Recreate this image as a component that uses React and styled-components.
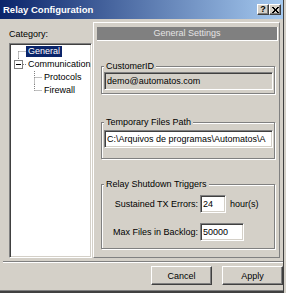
import styled, { createGlobalStyle } from "styled-components";

// estilos globales
const GlobalStyle = createGlobalStyle`
  html, body {
    margin: 0;
    padding: 0;
    background: #d4d0c8;
  }
  body {
    font-family: "Liberation Sans", Arial, sans-serif;
    font-size: 9px;
    color: #000;
  }
  * {
    box-sizing: border-box;
  }
`;

const Window = styled.div`
  width: 286px;
  height: 293px;
  display: flex;
  flex-direction: column;
  background: #d4d0c8;
  padding: 0 3px 3px 0;
  box-shadow: inset -2px 0 0 #d4d0c8, inset -3px 0 0 #404040,
    inset 0 -2px 0 #404040, inset 0 -3px 0 #808080;
`;

const TitleBar = styled.div`
  height: 19px;
  display: flex;
  align-items: center;
  padding: 0 2px 0 3px;
  background: linear-gradient(to right, #0a246a, #a6caf0);
`;

const TitleText = styled.div`
  flex: 1;
  color: #fff;
  font-weight: bold;
  font-size: 9.5px;
`;

const CaptionButton = styled.div`
  width: 12px;
  height: 11px;
  display: flex;
  align-items: center;
  justify-content: center;
  background: #d4d0c8;
  border: 1px solid;
  border-color: #fff #404040 #404040 #fff;
  box-shadow: inset -1px -1px 0 #808080;
  font-weight: bold;
  font-size: 9px;
  line-height: 9px;
`;

const Main = styled.div`
  height: 239px;
  display: flex;
  gap: 1px;
  padding: 3px 0 0 9px;
`;

const LeftColumn = styled.div`
  width: 83px;
  display: flex;
  flex-direction: column;
`;

const Label = styled.div`
  line-height: 11px;
  margin-top: 7px;
`;

const Tree = styled.div`
  margin-top: 3px;
  height: 215px;
  background: #fff;
  border: 1px solid;
  border-color: #808080 #fff #fff #808080;
  box-shadow: inset 1px 1px 0 #404040, inset -1px -1px 0 #d4d0c8;
  padding: 1px 1px 0 1px;
`;

const TreeRow = styled.div`
  height: 13px;
  display: flex;
  align-items: center;
  padding-left: ${(p) => p.$indent}px;

  svg {
    flex: none;
  }
`;

const TreeLabel = styled.span`
  line-height: 11px;
  padding: 0 2px;
  white-space: nowrap;
  background: ${(p) => (p.$selected ? "#0a246a" : "transparent")};
  color: ${(p) => (p.$selected ? "#fff" : "#000")};
`;

const Panel = styled.div`
  width: 187px;
  height: 236px;
  border: 1px solid;
  border-color: #fff #808080 #808080 #fff;
  padding: 4px 1px 0 3px;
  display: flex;
  flex-direction: column;
`;

const PanelHeader = styled.div`
  height: 14px;
  line-height: 13px;
  background: #808080;
  border-bottom: 1px solid #fff;
  border-right: 1px solid #fff;
  color: #e4e4e4;
  text-align: center;
`;

const PanelBody = styled.div`
  display: flex;
  flex-direction: column;
  padding: 0 3px 0 4px;
`;

const Group = styled.fieldset`
  margin: ${(p) => p.$top}px 0 0 0;
  padding: ${(p) => p.$padTop}px 1px ${(p) => p.$padBottom}px 2px;
  min-width: 0;
  border: 1px solid #808080;
  box-shadow: inset 1px 1px 0 #fff, 1px 1px 0 #fff;
`;

const Legend = styled.legend`
  padding: 0 2px;
  line-height: 11px;
  background: #d4d0c8;
`;

const TextBox = styled.input`
  display: block;
  width: ${(p) => p.$width || "100%"};
  height: 18px;
  margin: 0;
  padding: 0 2px;
  font-family: "Liberation Sans", Arial, sans-serif;
  font-size: 9px;
  color: #000;
  background: ${(p) => (p.$disabled ? "#d4d0c8" : "#fff")};
  border: 1px solid;
  border-color: #808080 #fff #fff #808080;
  box-shadow: inset 1px 1px 0 #404040, inset -1px -1px 0 #d4d0c8;
  outline: none;
`;

const TriggerGrid = styled.div`
  display: grid;
  grid-template-columns: 94px 1fr;
  column-gap: 2px;
  row-gap: 10px;
  align-items: center;
`;

const FieldLabel = styled.span`
  text-align: right;
  white-space: nowrap;
`;

const FieldControl = styled.div`
  display: flex;
  align-items: center;
  gap: 4px;
`;

const Separator = styled.div`
  margin-top: 3px;
  height: 2px;
  border-top: 1px solid #808080;
  border-bottom: 1px solid #fff;
  margin-left: 3px;
`;

const ButtonRow = styled.div`
  display: flex;
  justify-content: flex-end;
  gap: 10px;
  margin-top: 3px;
`;

const Button = styled.button`
  width: 61px;
  height: 19px;
  margin: 0;
  padding: 0;
  font-family: "Liberation Sans", Arial, sans-serif;
  font-size: 9px;
  color: #000;
  background: #d4d0c8;
  border: 1px solid;
  border-color: #fff #404040 #404040 #fff;
  box-shadow: inset -1px -1px 0 #808080;
`;

// lineas punteadas del arbol
function Connector({ w, up, down, box }) {
  const x = w === 15 ? 7.5 : 8.5;
  const cy = 6.5;
  const dots = { stroke: "#808080", strokeWidth: 1, strokeDasharray: "1 1" };
  return (
    <svg width={w} height={13}>
      {up && <line x1={x} y1={0} x2={x} y2={box ? 2 : cy} {...dots} />}
      {down && <line x1={x} y1={cy} x2={x} y2={13} {...dots} />}
      <line x1={box ? x + 4.5 : x} y1={cy} x2={w} y2={cy} {...dots} />
      {box && (
        <>
          <rect x={3.5} y={2.5} width={8} height={8} fill="#fff" stroke="#808080" />
          <line x1={5} y1={6.5} x2={10} y2={6.5} stroke="#000" />
        </>
      )}
    </svg>
  );
}

export default function App() {
  return (
    <>
      <GlobalStyle />
      <Window>
        <TitleBar>
          <TitleText>Relay Configuration</TitleText>
          <CaptionButton>?</CaptionButton>
          <CaptionButton>
            <svg width="7" height="6" viewBox="0 0 7 6">
              <path d="M0 0L6 6M1 0L7 6M6 0L0 6M7 0L1 6" stroke="#000" strokeWidth="1" />
            </svg>
          </CaptionButton>
        </TitleBar>

        <Main>
          <LeftColumn>
            <Label>Category:</Label>
            <Tree>
              <TreeRow $indent={0}>
                <Connector w={15} down />
                <TreeLabel $selected>General</TreeLabel>
              </TreeRow>
              <TreeRow $indent={0}>
                <Connector w={15} up box />
                <TreeLabel>Communication</TreeLabel>
              </TreeRow>
              <TreeRow $indent={15}>
                <Connector w={16} up down />
                <TreeLabel>Protocols</TreeLabel>
              </TreeRow>
              <TreeRow $indent={15}>
                <Connector w={16} up />
                <TreeLabel>Firewall</TreeLabel>
              </TreeRow>
            </Tree>
          </LeftColumn>

          <Panel>
            <PanelHeader>General Settings</PanelHeader>
            <PanelBody>
              <Group $top={20} $padTop={0} $padBottom={3}>
                <Legend>CustomerID</Legend>
                <TextBox $disabled readOnly defaultValue="demo@automatos.com" />
              </Group>

              <Group $top={23} $padTop={2} $padBottom={10}>
                <Legend>Temporary Files Path</Legend>
                <TextBox defaultValue={"C:\\Arquivos de programas\\Automatos\\A"} />
              </Group>

              <Group $top={20} $padTop={5} $padBottom={7}>
                <Legend>Relay Shutdown Triggers</Legend>
                <TriggerGrid>
                  <FieldLabel>Sustained TX Errors:</FieldLabel>
                  <FieldControl>
                    <TextBox $width="26px" defaultValue="24" />
                    <span>hour(s)</span>
                  </FieldControl>
                  <FieldLabel>Max Files in Backlog:</FieldLabel>
                  <FieldControl>
                    <TextBox $width="44px" defaultValue="50000" />
                  </FieldControl>
                </TriggerGrid>
              </Group>
            </PanelBody>
          </Panel>
        </Main>

        <Separator />
        <ButtonRow>
          <Button>Cancel</Button>
          <Button>Apply</Button>
        </ButtonRow>
      </Window>
    </>
  );
}
